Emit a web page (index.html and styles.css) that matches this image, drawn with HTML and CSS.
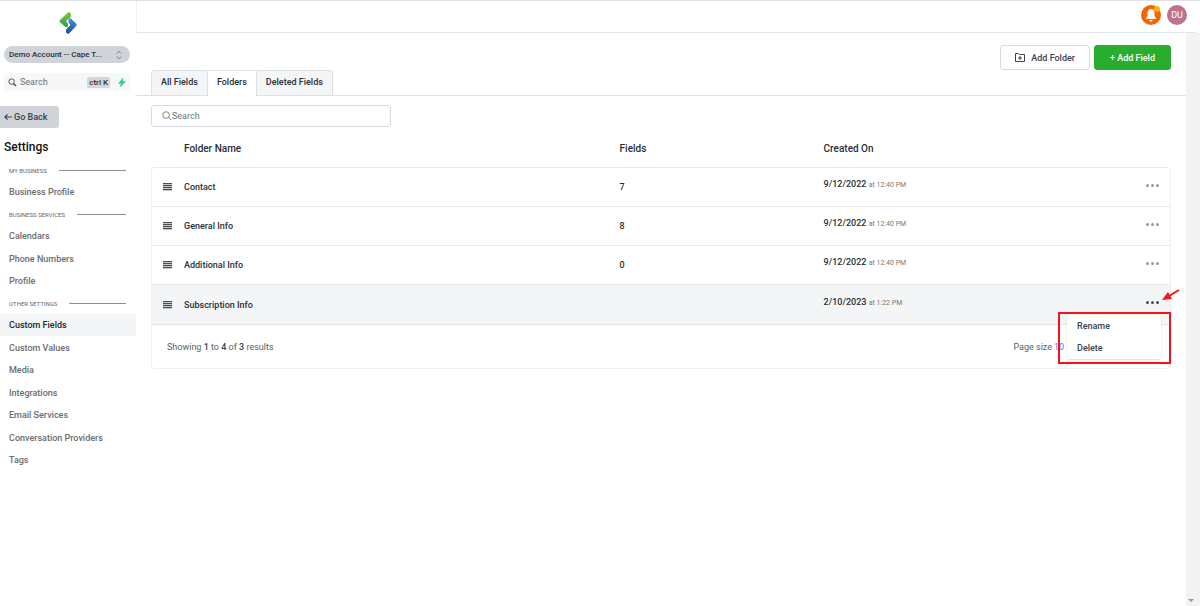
FILE: index.html
```html
<!DOCTYPE html>
<html lang="en">

<head>
    <meta charset="utf-8">
    <title>Custom Fields</title>
    <link rel="stylesheet" href="styles.css">
</head>

<body>
    <!-- Sidebar -->
    <aside class="sidebar">
        <svg class="logo" viewBox="0 0 18 24" aria-hidden="true">
            <defs>
                <linearGradient id="green" x1="0" y1="0" x2="0" y2="1">
                    <stop offset="0" stop-color="#86c440"/>
                    <stop offset="1" stop-color="#2f9e4e"/>
                </linearGradient>
                <linearGradient id="blue" x1="0" y1="0" x2="0" y2="1">
                    <stop offset="0" stop-color="#3f93d8"/>
                    <stop offset="1" stop-color="#1e50a4"/>
                </linearGradient>
            </defs>
            <path fill="url(#green)" stroke="url(#green)" stroke-linejoin="round" d="M9.500 1.500 11.500 2.500V5.500L6.500 10l2 2.500V15.500L6.500 15.500 1 10.800V9.500z"/>
            <path fill="url(#blue)" stroke="url(#blue)" stroke-linejoin="round" d="M10 8 11.500 7.800 17 13v1.500L9.500 22.500 7.500 21.500V18.500L12 14 10 11.500z"/>
        </svg>
        <button class="account" type="button">
            <span>Demo Account -- Cape T...</span>
            <svg viewBox="0 0 8 12" width="6" height="10"><path d="M1 4 4 1l3 3M1 8l3 3 3-3" fill="none" stroke="#555b66"/></svg>
        </button>
        <div class="quick-search">
            <svg viewBox="0 0 10 10" width="9" height="9"><path d="M6 6l3 3" stroke="#444" stroke-width="1.500"/><circle cx="4" cy="4" r="3" fill="none" stroke="#444"/></svg>
            <input type="text" placeholder="Search" aria-label="Search">
            <kbd>ctrl K</kbd>
            <svg viewBox="0 0 8 10" width="8" height="9"><path d="M5 0 0 6h3l-1 4 6-6H5z" fill="#37ca99" stroke="#37ca99" stroke-width=".5"/></svg>
        </div>
        <a class="go-back" href="#">
            <svg viewBox="0 0 9 8" width="8" height="8"><path d="M9 4H1M4 1 1 4l3 3" fill="none" stroke="#3b424e" stroke-width="1.300"/></svg>
            Go Back
        </a>
        <h1 class="sidebar-title">Settings</h1>
        <nav class="menu">
            <h2>My Business</h2>
            <ul>
                <li><a href="#">Business Profile</a></li>
            </ul>
            <h2>Business Services</h2>
            <ul>
                <li><a href="#">Calendars</a></li>
                <li><a href="#">Phone Numbers</a></li>
                <li><a href="#">Profile</a></li>
            </ul>
            <h2>Other Settings</h2>
            <ul>
                <li><a class="active" href="#">Custom Fields</a></li>
                <li><a href="#">Custom Values</a></li>
                <li><a href="#">Media</a></li>
                <li><a href="#">Integrations</a></li>
                <li><a href="#">Email Services</a></li>
                <li><a href="#">Conversation Providers</a></li>
                <li><a href="#">Tags</a></li>
            </ul>
        </nav>
    </aside>

    <div class="page">
        <header class="topbar">
            <button class="bell" type="button" aria-label="Notifications">
                <svg viewBox="0 0 12 14" width="12" height="14"><path d="M6 1C3.500 1 2.500 3 2.500 5v3L1 10v1h10v-1L9.500 8V5C9.500 3 8.500 1 6 1zM4.500 12a1.500 1.500 0 0 0 3 0z" fill="#fff"/></svg>
                <span class="bell-dot"></span>
            </button>
            <button class="avatar" type="button">DU</button>
        </header>

        <div class="page-body">
            <main class="content">
                <div class="actions">
                    <button class="btn" type="button">
                        <svg viewBox="0 0 10 9" width="10" height="9"><path d="M.5 8.500v-8h3l1 1h5v7zM5 3v4M3 5h4" fill="none" stroke="#3b424e"/></svg>
                        Add Folder
                    </button>
                    <button class="btn btn-green" type="button">+ Add Field</button>
                </div>
                <div class="tabs">
                    <button type="button">All Fields</button>
                    <button class="current" type="button">Folders</button>
                    <button type="button">Deleted Fields</button>
                </div>

                <div class="list">
                    <div class="search">
                        <svg viewBox="0 0 10 10" width="9" height="9"><circle cx="4.500" cy="4.500" r="3.700" fill="none" stroke="#777"/><path d="M7 7l2.700 2.700" stroke="#777"/></svg>
                        <input type="text" placeholder="Search" aria-label="Search folders">
                    </div>

                    <table class="folders">
                        <thead>
                            <tr>
                                <th class="col-drag"></th>
                                <th class="col-name">Folder Name</th>
                                <th class="col-fields">Fields</th>
                                <th>Created On</th>
                                <th class="col-more"></th>
                            </tr>
                        </thead>
                        <tbody>
                            <tr>
                                <td><span class="drag"></span></td>
                                <td class="name">Contact</td>
                                <td>7</td>
                                <td class="created">9/12/2022 <small>at 12:40 PM</small></td>
                                <td class="more"><button type="button" aria-label="More"><i></i><i></i><i></i></button></td>
                            </tr>
                            <tr>
                                <td><span class="drag"></span></td>
                                <td class="name">General Info</td>
                                <td>8</td>
                                <td class="created">9/12/2022 <small>at 12:40 PM</small></td>
                                <td class="more"><button type="button" aria-label="More"><i></i><i></i><i></i></button></td>
                            </tr>
                            <tr>
                                <td><span class="drag"></span></td>
                                <td class="name">Additional Info</td>
                                <td>0</td>
                                <td class="created">9/12/2022 <small>at 12:40 PM</small></td>
                                <td class="more"><button type="button" aria-label="More"><i></i><i></i><i></i></button></td>
                            </tr>
                            <tr class="selected">
                                <td><span class="drag"></span></td>
                                <td class="name">Subscription Info</td>
                                <td></td>
                                <td class="created">2/10/2023 <small>at 1:22 PM</small></td>
                                <td class="more">
                                    <button type="button" aria-label="More"><i></i><i></i><i></i></button>
                                    <svg class="arrow" viewBox="0 0 18 12" width="18" height="12"><path d="M17 1 7 7" stroke="#f5141b" stroke-width="2"/><path d="M0 11 6 3l4 7z" fill="#f5141b"/></svg>
                                    <div class="highlight">
                                        <div class="dropdown">
                                            <button type="button">Rename</button>
                                            <button type="button">Delete</button>
                                        </div>
                                    </div>
                                </td>
                            </tr>
                        </tbody>
                    </table>
                    <div class="table-footer">
                        <p>Showing <b>1</b> to <b>4</b> of <b>3</b> results</p>
                        <div class="page-size">
                            <label for="size">Page size</label>
                            <select id="size"><option>10</option></select>
                            <svg viewBox="0 0 6 4" width="5" height="4"><path d="M0 0h6L3 4z" fill="#4a7df0"/></svg>
                        </div>
                    </div>
                </div>
            </main>
            <div class="scroll-track"><span></span></div>
        </div>
    </div>
</body>

</html>
```
FILE: styles.css
```css
* {
    box-sizing: border-box;
}

body {
    margin: 0;
    min-height: 100vh;
    display: flex;
    border-top: 1px solid #dfe1e5;
    background: #fff;
    color: #2a2f36;
    font-family: Roboto, Arial, sans-serif;
    font-size: 9px;
    font-weight: 500;
}

button,
input,
select {
    font: inherit;
    color: inherit;
    margin: 0;
    padding: 0;
    border: none;
    background: none;
}

h1, h2, p, ul {
    margin: 0;
    padding: 0;
}

svg {
    flex: none;
}

/* Sidebar */
.sidebar {
    flex: none;
    width: 136px;
    display: flex;
    flex-direction: column;
    align-items: flex-start;
}

.logo {
    width: 18px;
    height: 24px;
    margin: 10px 0 11px;
    align-self: center;
}

.account {
    display: flex;
    align-items: center;
    justify-content: space-between;
    width: 126px;
    height: 17px;
    margin-left: 4px;
    padding: 0 8px 0 5px;
    border-radius: 9px;
    background: #d0d3d8;
    font-size: 8px;
}

.quick-search {
    display: flex;
    align-items: center;
    gap: 3px;
    width: 126px;
    height: 18px;
    margin: 10px 0 15px 4px;
    padding: 0 4px;
    border-radius: 3px;
    background: #f6f7f8;
}

.quick-search input {
    flex: 1;
    min-width: 0;
    font-weight: 400;
}

.quick-search kbd {
    padding: 0 2px;
    margin-right: 5px;
    background: #d5d6db;
    border-radius: 2px;
    font-family: inherit;
    font-size: 8px;
    line-height: 11px;
}

input::placeholder {
    color: #6e7278;
    opacity: 1;
}

.go-back {
    display: flex;
    align-items: center;
    gap: 2px;
    height: 22px;
    padding: 0 12px 0 4px;
    border-radius: 0 3px 3px 0;
    background: #d0d3d8;
    color: #3b424e;
    text-decoration: none;
}

.sidebar-title {
    margin: 12px 0 6px 4px;
    font-size: 12px;
    font-weight: 500;
    line-height: 14px;
    color: #111;
}

.menu {
    width: 100%;
}

.menu h2 {
    display: flex;
    align-items: center;
    gap: 12px;
    height: 21px;
    padding: 0 10px 0 9px;
    font-size: 6px;
    font-weight: 400;
    color: #666;
    text-transform: uppercase;
}

.menu h2::after {
    content: "";
    flex: 1;
    height: 1px;
    background: #8d8f92;
}

.menu ul {
    list-style: none;
}

.menu ul + h2,
.menu li:nth-child(even) {
    margin-top: 1px;
}

.menu a {
    display: block;
    padding-left: 9px;
    line-height: 22px;
    color: #6a6d72;
    text-decoration: none;
}

.menu a.active {
    background: #f3f5f6;
    color: #22262c;
}

/* Top bar */
.page {
    flex: 1;
    display: flex;
    flex-direction: column;
}

.topbar {
    display: flex;
    align-items: center;
    justify-content: flex-end;
    gap: 6px;
    height: 32px;
    margin-right: 3px;
    padding: 0 10px 3px 0;
    border-left: 1px solid #f0f1f2;
    border-bottom: 1px solid #e3e5e8;
}

.bell,
.avatar {
    display: flex;
    align-items: center;
    justify-content: center;
    width: 20px;
    height: 20px;
    border-radius: 50%;
    color: #fff;
}

.bell {
    position: relative;
    background: #fa6400;
}

.bell-dot {
    position: absolute;
    top: 1px;
    right: 1px;
    width: 6px;
    height: 6px;
    border-radius: 50%;
    background: #ffb400;
}

.avatar {
    background: #bd738f;
    font-weight: 400;
}

.page-body {
    flex: 1;
    display: flex;
}

.content {
    flex: 1;
    min-width: 0;
}

.scroll-track {
    display: flex;
    align-items: flex-end;
    justify-content: center;
    width: 14px;
    padding: 0 4px 4px 0;
    background: #f1f3f4;
}

.scroll-track span {
    border: 3px solid transparent;
    border-top-color: #999;
    border-bottom: none;
}

/* Buttons and tabs */
.actions {
    display: flex;
    justify-content: flex-end;
    gap: 4px;
    padding: 12px 15px 0;
}

.btn {
    display: flex;
    align-items: center;
    gap: 6px;
    height: 25px;
    padding: 0 14px;
    border: 1px solid #d8dbe0;
    border-radius: 3px;
    color: #3b424e;
}

.btn-green {
    padding: 0 15px;
    border-color: #29ad2e;
    background: #29ad2e;
    color: #fff;
}

.tabs {
    display: flex;
    height: 26px;
    padding-left: 15px;
    border-bottom: 1px solid #dcdfe3;
}

.tabs button {
    height: 25px;
    padding: 0 9px 2px;
    border: 1px solid #dcdfe3;
    border-bottom: none;
    background: #f3f5f6;
}

.tabs button + button {
    border-left: none;
}

.tabs button:first-child {
    border-radius: 4px 0 0 0;
}

.tabs button:last-child {
    border-radius: 0 4px 0 0;
}

.tabs .current {
    height: 26px;
    padding-bottom: 3px;
    background: #fff;
}

/* Folder list */
.list {
    padding: 9px 15px 0;
}

.search {
    display: flex;
    align-items: center;
    gap: 1px;
    width: 240px;
    height: 22px;
    padding: 0 10px 1px;
    border: 1px solid #d8dbe0;
    border-radius: 3px;
}

.search input {
    flex: 1;
    font-weight: 400;
}

.folders {
    width: 100%;
    table-layout: fixed;
    border-spacing: 0;
}

.folders th,
.folders td {
    padding: 0;
    text-align: left;
}

.folders th {
    height: 40px;
    padding-top: 3px;
    font-size: 10px;
    font-weight: 500;
}

.folders th,
.folders small {
    white-space: nowrap;
}

.folders .col-name,
.folders .name {
    padding-left: 3px;
}

.col-drag {
    width: 30px;
}

.col-name {
    width: 43%;
}

.col-fields {
    width: 20%;
}

.col-more {
    width: 40px;
}

.folders tbody td {
    height: 39px;
    border-top: 1px solid #e9ebed;
}

.folders tbody td:first-child {
    border-left: 1px solid #eff0f2;
}

.folders tbody td:last-child {
    border-right: 1px solid #eff0f2;
}

.folders tbody tr:first-child td:first-child {
    border-top-left-radius: 4px;
}

.folders tbody tr:first-child td:last-child {
    border-top-right-radius: 4px;
}

.drag {
    display: block;
    width: 9px;
    height: 8px;
    margin-left: 11px;
    background: repeating-linear-gradient(#4a4d52 0 1px, #c4c6c8 1px 2px);
}

.folders .created {
    padding-bottom: 6px;
}

.created small {
    font-size: 7px;
    font-weight: 400;
    color: #777;
}

.folders .more {
    position: relative;
    padding-bottom: 4px;
}

.more > button {
    display: flex;
    gap: 2px;
    margin: 0 11px 0 auto;
}

.more i {
    width: 3px;
    height: 3px;
    border-radius: 50%;
    background: #999;
}

.selected {
    background: #f3f5f6;
}

.selected i {
    background: #4a4d52;
}

.folders .selected td {
    height: 40px;
}

/* Row menu with the red marker around it */
.arrow {
    position: absolute;
    top: 4px;
    right: -10px;
}

.highlight {
    position: absolute;
    top: 27px;
    right: -1px;
    width: 113px;
    padding: 1px 8px 3px 7px;
    border: 2px solid #f5141b;
    z-index: 1;
}

.dropdown {
    display: flex;
    flex-direction: column;
    border-radius: 2px;
    background: #fff;
    box-shadow: 0 1px 2px rgba(0, 0, 0, 0.15);
}

.dropdown button {
    height: 22px;
    padding-left: 10px;
    text-align: left;
    color: #3b424e;
}

.table-footer {
    display: flex;
    align-items: center;
    justify-content: space-between;
    height: 45px;
    padding: 0 98px 0 15px;
    border: 1px solid #eff0f2;
    border-top-color: #e3e5e8;
    border-radius: 0 0 4px 4px;
    color: #5c6068;
    font-weight: 400;
}

.table-footer b {
    font-weight: 500;
    color: #3b424e;
}

.page-size {
    display: flex;
    align-items: center;
    gap: 2px;
}

.page-size select {
    appearance: none;
    color: #4a7df0;
}
```
